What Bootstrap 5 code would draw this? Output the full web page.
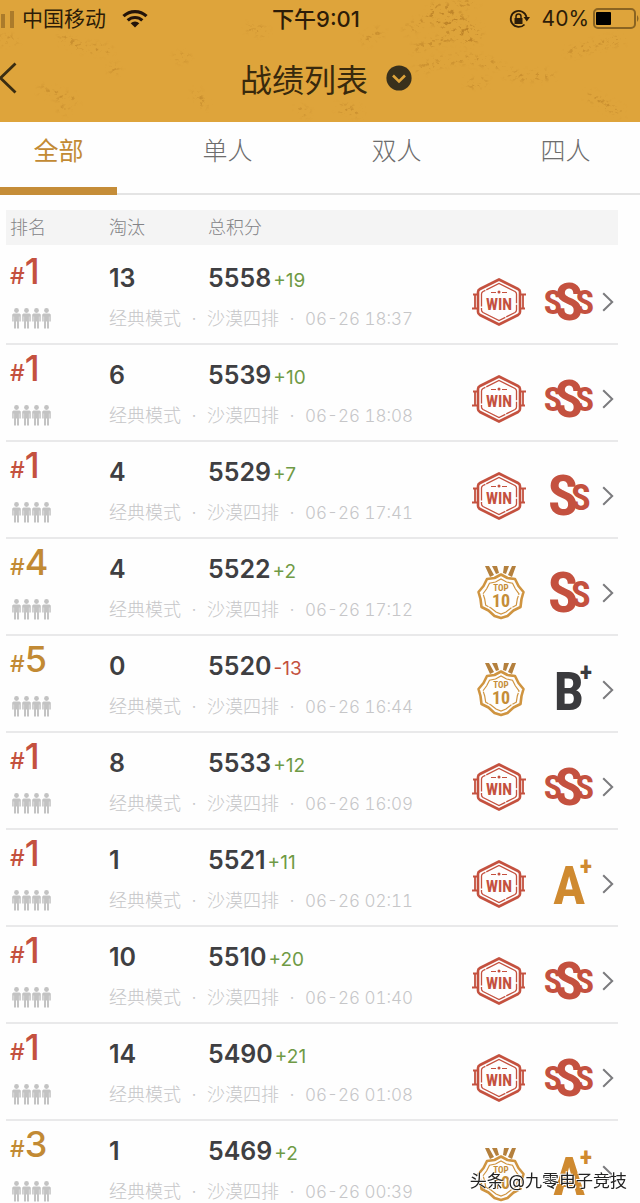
<!DOCTYPE html>
<html lang="zh-CN">
<head>
<meta charset="utf-8">
<meta name="viewport" content="width=device-width, initial-scale=1">
<title>战绩列表</title>
<link href="https://cdn.jsdelivr.net/npm/bootstrap@5.3.0/dist/css/bootstrap.min.css" rel="stylesheet">
<style>
  :root { --gold: #c28a34; --red: #c4513f; --ink: #3f3f42; --pale: #c6c6c8; }
  body { font-family: Inter, "Noto Sans CJK SC", sans-serif; background: #fefefe; color: var(--ink); }
  svg { display: block; flex: none; }
  .topbar { background: #dea43b; color: #38290d; }
  .texture { inset: 0; width: 100%; height: 100%; }
  .thirds { display: grid; grid-template-columns: 1fr auto 1fr; align-items: center; }
  .status { height: 37px; font-size: 21px; line-height: 32px; color: #2c1c08; }
  .status .clock { font-weight: 500; font-size: 22px; }
  .titlebar { height: 85px; padding-bottom: 4px; }
  .titlebar h1 { padding-right: 2px; font-size: 32px; line-height: 40px; font-weight: 400; font-family: "Noto Sans CJK SC", sans-serif; }
  .titlebar .heading { margin-left: 12px; }
  .tabs { height: 73px; border-bottom: 2px solid #e4e4e4; }
  .tabs button { width: 117px; height: 73px; padding: 0 0 8px; border: 0; border-bottom: 8px solid transparent; background: none; font-size: 25px; font-weight: 300; line-height: 40px; color: #6d6d6d; }
  .tabs button.active { color: var(--gold); border-color: #c58d38; font-weight: 400; }
  .records { margin: 15px 22px 0 6px; }
  .records table { width: 100%; table-layout: fixed; border-collapse: separate; border-spacing: 0; }
  .records th { height: 38px; padding: 0 0 0 4px; border-bottom: 3px solid #fefefe; background: #f4f4f4; font-size: 18px; line-height: 28px; font-weight: 300; color: #838386; }
  .records td { padding: 0 0 0 4px; vertical-align: top; white-space: nowrap; }
  .records .upper td { height: 54px; }
  .records .lower td { height: 43px; border-bottom: 2px solid #e9e9ea; }
  .records .upper td.marks { padding: 12px 4px 0 0; border-bottom: 2px solid #e9e9ea; vertical-align: middle; }
  .c-rank, .c-kill { width: 99px; } .c-mark { width: 150px; }
  .records .rank { padding-top: 5px; line-height: 36px; font-size: 36px; font-weight: 500; color: var(--gold); }
  .rank small { font-size: 23px; }
  .records .rank.first { color: var(--red); }
  .records .num { padding-top: 12px; line-height: 36px; font-size: 25px; font-weight: 600; }
  .delta { font-size: 19px; font-weight: 400; color: #6f9a45; padding-left: 2px; }
  .delta.down { color: var(--red); }
  .meta { font-size: 18px; line-height: 34px; font-weight: 300; color: var(--pale); }
  .meta i { display: inline-block; width: 26px; text-align: center; font-style: normal; }
  .meta time { font-size: 17px; font-variant-numeric: tabular-nums; }
  .squad { padding: 6px 0 0 2px; }
  .go { border: 0; padding: 0; background: none; }
  .grade { margin: 0 10px 0 20px; }
  .stamp { font-family: "Roboto Condensed", "Open Sans", sans-serif; font-weight: 700; }
  .credit { right: 13px; bottom: 8px; font-size: 17px; line-height: 28px; color: #222; text-shadow: 1px 1px 0 #fff, -1px -1px 0 #fff; }
</style>
</head>
<body>
<svg width="0" height="0" class="position-absolute" aria-hidden="true">
  <symbol id="person" viewBox="0 0 9 21"><circle cx="4.500" cy="2.500" r="2.400"/><path d="M1.500 5.500h6l1.300 1v7H7.300V8.500h-.4L7 20.500H5v-7H4v7H2l.1-12h-.4v5H.2v-7z"/></symbol>
  <symbol id="next" viewBox="0 0 12 20"><path d="m1.200 1.200 9 8.800-9 8.800" fill="none" stroke="#7b7b7e" stroke-width="2"/></symbol>
  <symbol id="win" viewBox="0 0 54 48">
    <g fill="none" stroke="#c4513f"><path d="M27 1.500 46 11q2 1 2 3v20q0 2-2 3L27 46.500 8 37q-2-1-2-3V14q0-2 2-3z" stroke-width="2.600"/><path d="M27 5.500 43 13.500q1.500 1 1.500 2.500v16q0 1.500-1.500 2.500L27 42.500 11 34.500Q9.500 33.500 9.500 32V16q0-1.500 1.500-2.500z" stroke-width="1.300" stroke-dasharray="30 1.500 18 1"/><path d="M1 16.500h5M0 30.500h6M3 17v13M48 16.500h6M48 30.500h5M51 17v13" stroke-width="1.800"/><path d="M19 14.500h5M30 14.500h5" stroke-width="1.200"/></g>
    <circle cx="27" cy="14" r="1.500" fill="#c4513f"/>
  </symbol>
  <symbol id="top10" viewBox="0 0 50 56">
    <g fill="none" stroke="#cf9440"><path d="M25 9.500 31.500 13l7.500 1 3.500 7 5 6-2 7-1 8-7 3.500-6 5.500-6.500 2-6.500-2-6-5.500-7-3.500-1-8-2-7 5-6 3.500-7 7.500-1z" stroke-width="2.600" stroke-linejoin="round"/><path d="M25 14 30.500 17l6 1.200 2.800 5.600 3.700 5-1.700 5.200-1 6.200-5.300 2.800-5 4-5 2-5-2-5-4-5.300-2.800-1-6.200-1.700-5.200 3.700-5 2.800-5.600 6-1.200z" stroke-width="1.200" stroke-dasharray="26 1 14 1"/></g>
    <path d="m9 1h4l5 9-4 2zM16 1h5l2 7-3 1zM28 1h5l-3 8-3-1zM36 1h4l-4 11-4-2z" fill="#b4803d"/>
  </symbol>
</svg>

<div class="d-flex flex-column vh-100 overflow-hidden">
  <header class="topbar position-relative flex-shrink-0">
    <svg class="texture position-absolute" viewBox="0 0 640 122" preserveAspectRatio="xMidYMid slice" aria-hidden="true">
      <filter id="grit" filterUnits="userSpaceOnUse" x="0" y="0" width="640" height="122" color-interpolation-filters="sRGB">
        <feTurbulence type="fractalNoise" baseFrequency=".2 .28" numOctaves="4" seed="8"/>
        <feColorMatrix values="0 0 0 0 .66  0 0 0 0 .43  0 0 0 0 .11  0 6 0 0 -3.300" result="specks"/>
        <feGaussianBlur in="SourceAlpha" stdDeviation="3"/>
        <feComposite in="specks" operator="in"/>
      </filter>
      <g filter="url(#grit)" opacity=".6" fill="none" stroke="#000" stroke-width="6" stroke-linecap="round">
        <path d="m408 30 20-12 20-9 26-8M416 48l40-12M418 70l22-8 24-4 34 7M506 72l16 5 28-2M62 38l20 9 26 3M42 90l32 10M366 40l14-8M178 58l8-1M112 70l4-2M62 108l4 2M196 94l8 10M470 84l14-2M340 108l18 4M620 40l-50 12M590 96l30 16M300 110l6 2M0 40h14M250 28l14 4"/>
        <path d="m440 14 30 20" stroke-width="22"/>
      </g>
    </svg>
    <div class="status thirds position-relative">
      <div class="d-flex align-items-center">
        <svg width="14" height="18" aria-hidden="true"><path d="M1 4h4v14H1zM10 1h4v17h-4z" fill="#ab7b2b"/></svg>
        <span class="ms-2">中国移动</span>
        <svg class="ms-3" width="26" height="19" viewBox="0 0 26 19" role="img" aria-label="Wi-Fi"><g fill="none" stroke="#23140a" stroke-width="3.200"><path d="M1.500 7.200a16.500 16.500 0 0 1 23 0M5.700 11.400a10.600 10.600 0 0 1 14.600 0"/></g><path d="m13 18.500-4.300-4.300a6.200 6.200 0 0 1 8.600 0z" fill="#23140a"/></svg>
      </div>
      <span class="clock me-2">下午9:01</span>
      <div class="d-flex align-items-center justify-content-end">
        <svg width="21" height="20" viewBox="0 0 21 20" role="img" aria-label="方向锁定"><path d="M15.500 15.500A8 8 0 1 1 17.500 8" fill="none" stroke="#2c1c08" stroke-width="1.800"/><path d="M14.500 8h6.500l-3.200 4.500zM5.500 9h8v6h-8z" fill="#2c1c08"/><path d="M7 9V7.500a2.500 2.500 0 0 1 5 0V9" fill="none" stroke="#2c1c08" stroke-width="1.500"/></svg>
        <span class="ms-2 me-1 ps-1">40%</span>
        <svg width="47" height="21" viewBox="0 0 47 21" role="img" aria-label="电量 40%"><rect x="1" y="1" width="41" height="19" rx="4" fill="none" stroke="#8a6422" stroke-width="2"/><rect x="3" y="4" width="15" height="13" rx="1" fill="#000"/><path d="M44 7q3 3.500 0 7z" fill="#8a6422"/></svg>
      </div>
    </div>
    <div class="titlebar thirds position-relative">
      <button class="go" type="button" aria-label="返回"><svg width="17" height="32" viewBox="0 0 17 32"><path d="M15.500 1.500.5 16l15 14.500" fill="none" stroke="#3a2d12" stroke-width="2.800"/></svg></button>
      <div class="heading d-flex align-items-center">
        <h1 class="my-0">战绩列表</h1>
        <button class="go ms-3" type="button" aria-label="选择"><svg width="26" height="26" viewBox="0 0 26 26"><circle cx="13" cy="13" r="12.600" fill="#38301c"/><path d="m7 10.500 6 6 6-6" fill="none" stroke="#dea43b" stroke-width="2.600"/></svg></button>
      </div>
    </div>
  </header>

  <nav class="tabs d-flex justify-content-between pe-3 flex-shrink-0" aria-label="模式">
    <button type="button" class="active">全部</button>
    <button type="button">单人</button>
    <button type="button">双人</button>
    <button type="button">四人</button>
  </nav>

  <main class="records">
    <table>
      <colgroup><col class="c-rank"><col class="c-kill"><col><col class="c-mark"></colgroup>
      <thead><tr><th>排名</th><th>淘汰</th><th>总积分</th><th aria-label="评级"></th></tr></thead>
    </table>
  </main>
  <div class="credit position-fixed">头条 @九零电子竞技</div>
</div>

<script>
  const records = [
    [1, 13, 5558, '+19', '18:37', 'SSS'],
    [1, 6, 5539, '+10', '18:08', 'SSS'],
    [1, 4, 5529, '+7', '17:41', 'SS'],
    [4, 4, 5522, '+2', '17:12', 'SS'],
    [5, 0, 5520, '-13', '16:44', 'B+'],
    [1, 8, 5533, '+12', '16:09', 'SSS'],
    [1, 1, 5521, '+11', '02:11', 'A+'],
    [1, 10, 5510, '+20', '01:40', 'SSS'],
    [1, 14, 5490, '+21', '01:08', 'SSS'],
    [3, 1, 5469, '+2', '00:39', 'A+']
  ];
  // Each grade is a colour and its letters: text, centre x, baseline, font size
  const grades = {
    'SSS': ['#c4513f', [['S', 7, 37, 34], ['S', 23, 43, 52], ['S', 39, 37, 34]]],
    'SS': ['#c4513f', [['S', 17, 44, 56], ['S', 35, 39, 36]]],
    'B+': ['#3a3a3d', [['B', 23, 45, 54], ['+', 40, 16, 26]]],
    'A+': ['#cf8a30', [['A', 23, 45, 54], ['+', 40, 16, 26]]]
  };
  const person = x => `<use href="#person" x="${x}" width="9" height="21"/>`;
  const letter = ([t, x, y, s]) => `<text x="${x}" y="${y}" font-size="${s}">${t}</text>`;
  const gradeMark = ([color, letters]) =>
    `<svg class="stamp grade" width="46" height="50" text-anchor="middle" fill="${color}" overflow="visible">${letters.map(letter).join('')}</svg>`;
  const medal = rank => rank === 1
    ? `<svg class="stamp" width="54" height="48" text-anchor="middle" fill="#c4513f"><use href="#win"/>${letter(['WIN', 27, 32, 16])}</svg>`
    : `<svg class="stamp" width="50" height="56" text-anchor="middle" fill="#c58d38"><use href="#top10"/>${letter(['TOP', 25, 26, 9])}${letter(['10', 25, 42, 18])}</svg>`;
  document.querySelector('.records table').insertAdjacentHTML('beforeend', records.map(([rank, kills, score, delta, time, grade]) => `
    <tbody>
      <tr class="upper">
        <td class="rank ${rank === 1 ? 'first' : ''}"><small>#</small>${rank}</td>
        <td class="num">${kills}</td>
        <td class="num">${score}<span class="delta ${delta[0] === '-' ? 'down' : ''}">${delta}</span></td>
        <td class="marks" rowspan="2"><div class="d-flex align-items-center justify-content-end">
          ${medal(rank)}${gradeMark(grades[grade])}
          <button class="go" type="button" aria-label="详情"><svg width="12" height="20"><use href="#next"/></svg></button>
        </div></td>
      </tr>
      <tr class="lower">
        <td><div class="squad"><svg width="39" height="21" fill="#c3c3c3" role="img" aria-label="四人">${[0, 10, 20, 30].map(person).join('')}</svg></div></td>
        <td class="meta" colspan="2">经典模式<i>·</i>沙漠四排<i>·</i><time>06-26 ${time}</time></td>
      </tr>
    </tbody>`).join(''));
</script>
<script src="https://cdn.jsdelivr.net/npm/bootstrap@5.3.0/dist/js/bootstrap.bundle.min.js"></script>
</body>
</html>
